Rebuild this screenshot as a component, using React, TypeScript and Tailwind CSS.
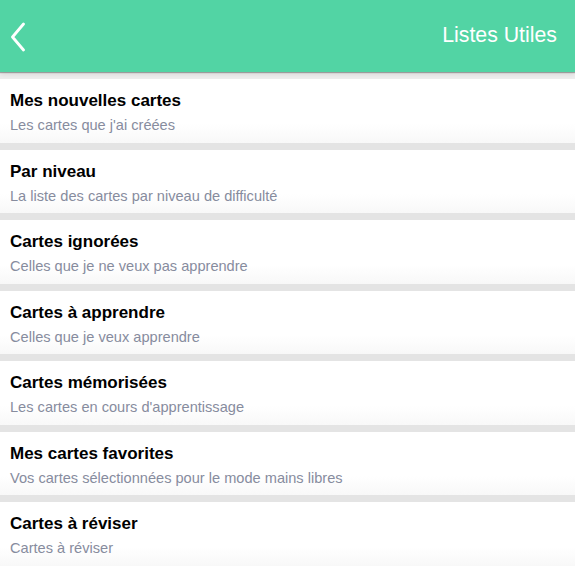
const items = [
  { title: "Mes nouvelles cartes", sub: "Les cartes que j'ai créées" },
  { title: "Par niveau", sub: "La liste des cartes par niveau de difficulté" },
  { title: "Cartes ignorées", sub: "Celles que je ne veux pas apprendre" },
  { title: "Cartes à apprendre", sub: "Celles que je veux apprendre" },
  { title: "Cartes mémorisées", sub: "Les cartes en cours d'apprentissage" },
  { title: "Mes cartes favorites", sub: "Vos cartes sélectionnées pour le mode mains libres" },
  { title: "Cartes à réviser", sub: "Cartes à réviser" },
];

export default function App() {
  return (
    <div className="h-[566px] w-[575px] overflow-hidden bg-[#e4e4e4] font-[Liberation_Sans,Arial,sans-serif]">
      <header className="relative z-10 flex h-[72px] items-center justify-between bg-[#52d4a4] pl-[11px] pr-[18px] shadow-[0_1px_1px_rgba(0,0,0,0.3),0_3px_5px_rgba(0,0,0,0.08)]">
        <svg width="14" height="30" viewBox="0 0 14 30" fill="none" className="mt-[1px]">
          <path d="M12.5 2 L1.5 15 L12.5 28" stroke="white" strokeWidth="2.8" strokeLinecap="round" strokeLinejoin="round" />
        </svg>
        <h1 className="text-[21.3px] leading-none text-white">Listes Utiles</h1>
      </header>
      <div className="h-[7px] bg-[#eeeeee]" />
      <ul className="flex flex-col gap-[7px]">
        {items.map((it) => (
          <li key={it.title} className="h-[63.5px] bg-gradient-to-b from-white from-70% to-[#f8f8f8] px-[10px] pt-[12px]">
            <div className="text-[17px] font-bold leading-[20px] text-black">{it.title}</div>
            <div className="mt-[4px] text-[14.6px] leading-[20px] text-[#878c9e]">{it.sub}</div>
          </li>
        ))}
      </ul>
    </div>
  );
}
